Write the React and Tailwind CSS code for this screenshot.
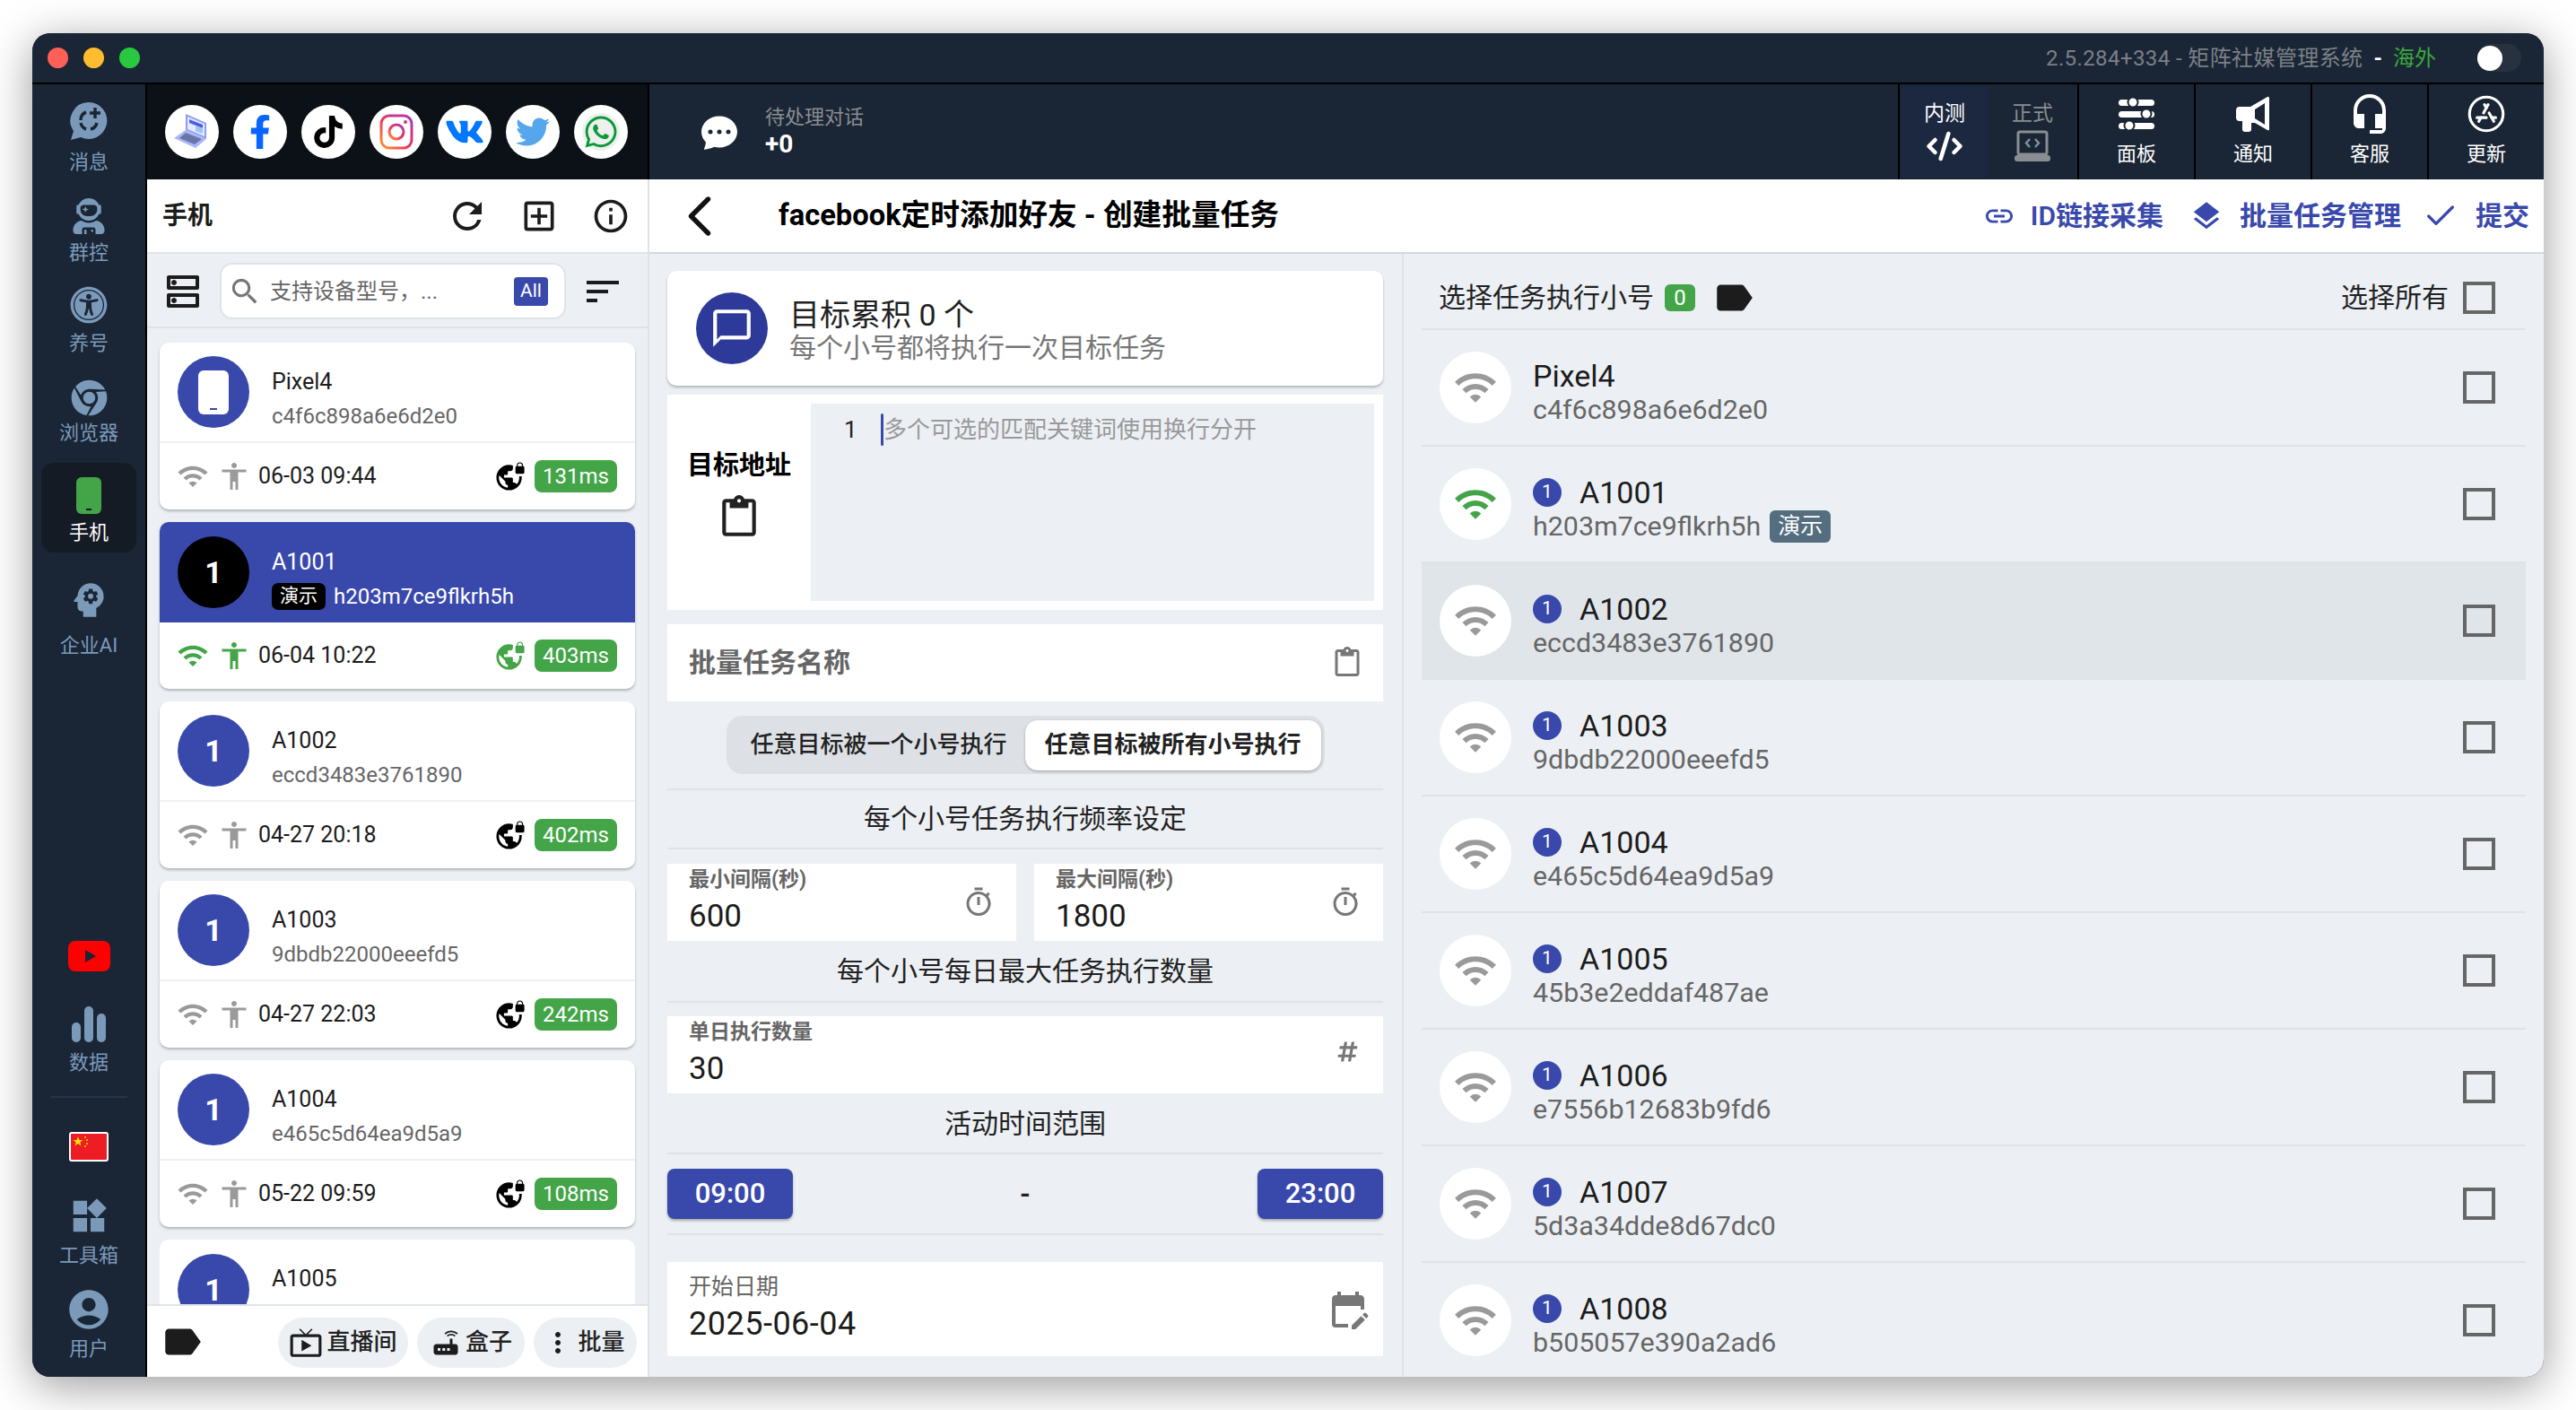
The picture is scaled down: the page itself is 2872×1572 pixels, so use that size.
import { ChevronLeft, Check, CodeXml } from 'lucide-react';
import { BsChatDotsFill } from 'react-icons/bs';
import { FaChrome, FaFacebookF, FaHashtag, FaTiktok, FaTwitter, FaUniversalAccess, FaUserAstronaut, FaVk, FaWhatsapp } from 'react-icons/fa';
import { MdAccessibility, MdAccountCircle, MdChatBubbleOutline, MdEditCalendar, MdHeadsetMic, MdInfoOutline, MdLabel, MdLayers, MdLink, MdMoreVert, MdOutlineAddBox, MdOutlineContentPaste, MdOutlineDns, MdOutlineLiveTv, MdOutlineTimer, MdPsychology, MdRefresh, MdRouter, MdSearch, MdSort, MdVpnLock, MdWidgets, MdWifi } from 'react-icons/md';
import { TbBrandAppstore } from 'react-icons/tb';

const cards = [
  { name: 'Pixel4', id: 'c4f6c898a6e6d2e0', time: '06-03 09:44', ping: '131ms', device: true },
  { name: 'A1001', id: 'h203m7ce9flkrh5h', time: '06-04 10:22', ping: '403ms', active: true },
  { name: 'A1002', id: 'eccd3483e3761890', time: '04-27 20:18', ping: '402ms' },
  { name: 'A1003', id: '9dbdb22000eeefd5', time: '04-27 22:03', ping: '242ms' },
  { name: 'A1004', id: 'e465c5d64ea9d5a9', time: '05-22 09:59', ping: '108ms' },
];

const rows = [
  { name: 'Pixel4', id: 'c4f6c898a6e6d2e0', device: true },
  { name: 'A1001', id: 'h203m7ce9flkrh5h', online: true, demo: true },
  { name: 'A1002', id: 'eccd3483e3761890', hover: true },
  { name: 'A1003', id: '9dbdb22000eeefd5' },
  { name: 'A1004', id: 'e465c5d64ea9d5a9' },
  { name: 'A1005', id: '45b3e2eddaf487ae' },
  { name: 'A1006', id: 'e7556b12683b9fd6' },
  { name: 'A1007', id: '5d3a34dde8d67dc0' },
  { name: 'A1008', id: 'b505057e390a2ad6' },
];

function BubbleIcon() {
  return (
    <svg width="44" height="44" viewBox="0 0 44 44">
      <path d="M22 1a20.500 20.500 0 1 1-9 39L2 43l3-10A20.500 20.500 0 0 1 22 1z" fill="#7b9aba" />
      <path d="M13 21a9.500 9.500 0 0 1 6-9M19 31a9.500 9.500 0 0 1-6-7M31 24a9.500 9.500 0 0 1-7 7" fill="none" stroke="#1a2635" strokeWidth="3.500" />
      <path d="M29 7v12M23 13h12" stroke="#1a2635" strokeWidth="3.500" />
    </svg>
  );
}

function BarsIcon() {
  return (
    <svg width="38" height="40" viewBox="0 0 38 40" fill="#7b9aba">
      <rect x="0" y="18" width="10" height="22" rx="5" />
      <rect x="14" y="0" width="10" height="40" rx="5" />
      <rect x="28" y="8" width="10" height="32" rx="5" />
    </svg>
  );
}

function LaptopArt() {
  return (
    <svg width="44" height="44" viewBox="0 0 44 44">
      <polygon points="15,2 38,12 38,30 15,20" fill="#8c9cf5" />
      <polygon points="17,5 36,13 36,27 17,19" fill="#e4e9ff" />
      <polygon points="19,8 34,14 34,18 19,12" fill="#4a5fe0" />
      <polygon points="26,15 34,18 34,24 26,21" fill="#9cc4f5" />
      <polygon points="15,20 38,30 26,40 2,29" fill="#aab6fa" />
      <polygon points="15,23 33,30 25,36 8,29" fill="#6b76a8" />
    </svg>
  );
}

function InstaArt() {
  return (
    <svg width="38" height="40" viewBox="0 0 38 40">
      <defs>
        <linearGradient id="ig" x1="0" y1="1" x2="1" y2="0">
          <stop offset="0" stopColor="#fd9a2e" />
          <stop offset="0.45" stopColor="#f0355e" />
          <stop offset="1" stopColor="#a63cb8" />
        </linearGradient>
      </defs>
      <rect x="2" y="2" width="34" height="36" rx="9" fill="none" stroke="url(#ig)" strokeWidth="3" />
      <circle cx="19" cy="20" r="8" fill="none" stroke="url(#ig)" strokeWidth="3" />
      <circle cx="29" cy="9" r="2" fill="#c0369a" />
    </svg>
  );
}

function WhatsappArt() {
  return (
    <span className="flex h-[42px] w-[42px] items-center justify-center rounded-full bg-[#efefef]">
      <FaWhatsapp size={40} color="#0a9b38" />
    </span>
  );
}

function FlagArt() {
  return (
    <svg width="44" height="33" viewBox="0 0 44 33">
      <rect x="1" y="1" width="42" height="31" rx="2" fill="#ee1c25" stroke="#fff" strokeWidth="2" />
      <polygon points="10,5 11.500,9 15.500,9 12.300,11.500 13.500,15.500 10,13 6.500,15.500 7.700,11.500 4.500,9 8.500,9" fill="#ffde00" />
      <circle cx="18" cy="6" r="1" fill="#ffde00" />
      <circle cx="20" cy="9" r="1" fill="#ffde00" />
      <circle cx="20" cy="13" r="1" fill="#ffde00" />
      <circle cx="18" cy="16" r="1" fill="#ffde00" />
    </svg>
  );
}

function YoutubeArt() {
  return (
    <svg width="47" height="34" viewBox="0 0 47 34">
      <rect width="47" height="34" rx="8" fill="#fe0000" />
      <polygon points="19,10 31,17 19,24" fill="#1a2635" />
    </svg>
  );
}

function LaptopCodeIcon() {
  return (
    <svg width="40" height="36" viewBox="0 0 40 36" fill="none">
      <rect x="4" y="2" width="32" height="25" rx="2" stroke="#8a8d92" strokeWidth="3" />
      <path d="M17 10l-4 4.500 4 4.500M23 10l4 4.500-4 4.500" stroke="#8a8d92" strokeWidth="2.500" />
      <rect x="0" y="28" width="40" height="7" rx="3" fill="#8a8d92" />
    </svg>
  );
}

function SlidersIcon() {
  return (
    <svg width="40" height="40" viewBox="0 0 40 40">
      <rect x="0" y="4" width="40" height="7" rx="3.500" fill="#fff" />
      <rect x="0" y="17" width="40" height="7" rx="3.500" fill="#fff" />
      <rect x="0" y="30" width="40" height="7" rx="3.500" fill="#fff" />
      <circle cx="16" cy="7" r="5.500" fill="#fff" stroke="#1a2635" strokeWidth="2" />
      <circle cx="31" cy="20" r="5.500" fill="#fff" stroke="#1a2635" strokeWidth="2" />
      <circle cx="12" cy="33" r="5.500" fill="#fff" stroke="#1a2635" strokeWidth="2" />
    </svg>
  );
}

function MegaphoneIcon() {
  return (
    <svg width="40" height="40" viewBox="0 0 40 40">
      <path d="M5 12h12L36 1q2-1 2 2v34q0 2-2 1L22 30h-4v7q0 3-3 3h-4q-3 0-3-3v-9H5q-4 0-4-4V16q0-4 4-4z" fill="#fff" />
      <path d="M22 15l11-7v24l-11-7z" fill="#1a2635" />
    </svg>
  );
}

function SideItem({ icon, label, gap, top }) {
  return (
    <div className={`flex flex-col items-center ${top}`}>
      <div className="flex h-[44px] items-center justify-center">{icon}</div>
      <span className={`text-[22px] leading-[30px] text-[#7b9aba] ${gap}`}>{label}</span>
    </div>
  );
}

function Sidebar() {
  return (
    <div className="flex w-[128px] shrink-0 flex-col justify-between border-r-2 border-black bg-[#1a2635] pb-[16px]">
      <div className="flex flex-col">
        <SideItem top="mt-[19px]" gap="mt-[9px]" label="消息" icon={<BubbleIcon />} />
        <SideItem top="mt-[23px]" gap="mt-[4px]" label="群控" icon={<FaUserAstronaut size={40} color="#7b9aba" />} />
        <SideItem top="mt-[21px]" gap="mt-[6px]" label="养号" icon={<FaUniversalAccess size={42} color="#7b9aba" />} />
        <SideItem top="mt-[23px]" gap="mt-[3px]" label="浏览器" icon={<FaChrome size={41} color="#7b9aba" />} />
        <div className="mx-[10px] mt-[18px] flex h-[100px] flex-col items-center rounded-[14px] bg-[#141b24] pt-[16px]">
          <div className="flex h-[41px] w-[28px] items-end justify-center rounded-[6px] bg-[#43a547] pb-[4px]">
            <div className="h-[2px] w-[6px] bg-[#141b24]" />
          </div>
          <span className="mt-[6px] text-[22px] leading-[30px] text-white">手机</span>
        </div>
        <SideItem top="mt-[31px]" gap="mt-[14px]" label="企业AI" icon={<MdPsychology size={50} color="#7b9aba" />} />
      </div>
      <div className="flex flex-col items-center">
        <YoutubeArt />
        <SideItem top="mt-[37px]" gap="mt-[6px]" label="数据" icon={<BarsIcon />} />
        <div className="mt-[22px] h-[2px] w-[86px] bg-[#263449]" />
        <div className="mt-[38px]"><FlagArt /></div>
        <SideItem top="mt-[39px]" gap="mt-[7px]" label="工具箱" icon={<MdWidgets size={46} color="#7b9aba" />} />
        <SideItem top="mt-[23px]" gap="mt-[7px]" label="用户" icon={<MdAccountCircle size={52} color="#7b9aba" />} />
      </div>
    </div>
  );
}

function SocialStrip() {
  const items = [
    <LaptopArt key="laptop" />,
    <FaFacebookF key="fb" size={38} color="#0866ff" />,
    <FaTiktok key="tt" size={36} color="#000" />,
    <InstaArt key="ig" />,
    <FaVk key="vk" size={44} color="#0077ff" />,
    <FaTwitter key="tw" size={38} color="#55a6ec" />,
    <WhatsappArt key="wa" />,
  ];
  return (
    <div className="flex w-[558px] shrink-0 items-start gap-[16px] bg-[#0b1116] pl-[20px] pt-[23px]">
      {items.map((item, i) => (
        <div key={i} className="flex h-[60px] w-[60px] items-center justify-center rounded-full bg-white">{item}</div>
      ))}
    </div>
  );
}

function TopButton({ icon, label }) {
  return (
    <div className="flex w-[130px] flex-col items-center border-l-2 border-black pt-[11px]">
      <div className="flex h-[44px] items-center justify-center">{icon}</div>
      <span className="mt-[8px] text-[22px] leading-[30px] text-white">{label}</span>
    </div>
  );
}

function TopBar() {
  return (
    <div className="flex h-[106px] shrink-0">
      <SocialStrip />
      <div className="flex flex-1 border-l-2 border-black bg-[#1a2635]">
        <div className="ml-[58px] flex items-center">
          <BsChatDotsFill size={40} color="#fff" />
          <div className="ml-[31px] mb-[3px] flex flex-col">
            <span className="text-[22px] leading-[30px] text-[#8a8d92]">待处理对话</span>
            <span className="text-[28px] font-bold leading-[30px] text-white">+0</span>
          </div>
        </div>
        <div className="ml-auto flex">
          <div className="flex border-l-2 border-black py-[2px] pl-[2px]">
            <div className="flex w-[96px] flex-col items-center bg-[#1c2740] pt-[17px]">
              <span className="text-[23px] leading-[28px] text-white">内测</span>
              <CodeXml size={42} color="#fff" strokeWidth={2.6} className="mt-[1px]" />
            </div>
            <div className="flex w-[100px] flex-col items-center pt-[17px]">
              <span className="text-[23px] leading-[28px] text-[#8a8d92]">正式</span>
              <div className="mt-[4px]"><LaptopCodeIcon /></div>
            </div>
          </div>
          <TopButton label="面板" icon={<SlidersIcon />} />
          <TopButton label="通知" icon={<MegaphoneIcon />} />
          <TopButton label="客服" icon={<MdHeadsetMic size={48} color="#fff" />} />
          <TopButton label="更新" icon={<TbBrandAppstore size={50} color="#fff" strokeWidth={1.5} />} />
        </div>
      </div>
    </div>
  );
}

function CardHead({ card, green }) {
  return (
    <div className={`flex h-[112px] items-center pl-[20px] ${green ? 'bg-[#3949ab]' : 'border-b-2 border-[#eef0f3]'}`}>
      <div className={`flex h-[80px] w-[80px] shrink-0 items-center justify-center rounded-full ${green ? 'bg-black' : 'bg-[#3949ab]'}`}>
        {card.device ? (
          <div className="flex h-[49px] w-[34px] items-end justify-center rounded-[6px] bg-white pb-[5px]">
            <div className="h-[2px] w-[8px] bg-[#3949ab]" />
          </div>
        ) : (
          <span className="text-[34px] font-bold text-white">1</span>
        )}
      </div>
      <div className="ml-[25px] mt-[14px] flex flex-col">
        <span className={`text-[25px] leading-[34px] ${green ? 'text-white' : 'text-[#1c1c1c]'}`}>{card.name}</span>
        <div className="mt-[5px] flex items-center">
          {green && (
            <span className="mr-[9px] flex h-[30px] w-[60px] items-center justify-center rounded-[7px] bg-black text-[21px] text-white">演示</span>
          )}
          <span className={`text-[24px] leading-[32px] ${green ? 'text-white' : 'text-[#666]'}`}>{card.id}</span>
        </div>
      </div>
    </div>
  );
}

function DeviceCard({ card }) {
  const green = card.active;
  const iconColor = green ? '#43a547' : '#9a9a9a';
  return (
    <div className="h-[186px] shrink-0 overflow-hidden rounded-[10px] bg-white shadow-[0_2px_3px_rgba(0,0,0,0.25)]">
      <CardHead card={card} green={green} />
      <div className="flex h-[74px] items-center pl-[19px] pr-[20px]">
        <MdWifi size={36} color={iconColor} />
        <MdAccessibility size={36} color={iconColor} className="ml-[10px]" />
        <span className="ml-[9px] text-[25px] text-[#1c1c1c]">{card.time}</span>
        <MdVpnLock size={34} color={green ? '#43a547' : '#000'} className="ml-auto" />
        <span className="ml-[10px] flex h-[36px] w-[92px] items-center justify-center rounded-[8px] bg-[#43a547] text-[24px] text-white">{card.ping}</span>
      </div>
    </div>
  );
}

// A1005 only peeks out above the bottom bar, so just its avatar and name are drawn
function PartialCard() {
  return (
    <div className="h-[72px] shrink-0 overflow-hidden rounded-t-[10px] bg-white">
      <div className="flex items-start pl-[20px] pt-[16px]">
        <div className="flex h-[80px] w-[80px] shrink-0 items-center justify-center rounded-full bg-[#3949ab]">
          <span className="text-[34px] font-bold text-white">1</span>
        </div>
        <span className="ml-[25px] mt-[11px] text-[25px] leading-[34px] text-[#1c1c1c]">A1005</span>
      </div>
    </div>
  );
}

function PillButton({ icon, label, width }) {
  return (
    <div className={`flex h-[56px] items-center justify-center gap-[4px] rounded-full bg-[#ecf0f4] text-[26px] font-medium text-[#222] ${width}`}>
      {icon}
      <span>{label}</span>
    </div>
  );
}

function LeftPanel() {
  return (
    <div className="flex w-[560px] shrink-0 flex-col border-r-2 border-[#dfe3e8]">
      <div className="flex h-[83px] shrink-0 items-center border-b-2 border-[#dfe3e8] bg-white pl-[17px]">
        <span className="text-[28px] font-bold text-[#1c1c1c]">手机</span>
        <MdRefresh size={48} color="#1c1c1c" className="ml-[260px]" />
        <MdOutlineAddBox size={44} color="#1c1c1c" className="ml-[34px]" />
        <MdInfoOutline size={44} color="#1c1c1c" className="ml-[36px]" />
      </div>
      <div className="flex h-[83px] shrink-0 items-center border-b-2 border-[#dfe3e8] bg-[#ecf0f4] pl-[16px] pt-[2px]">
        <MdOutlineDns size={48} color="#1c1c1c" />
        <div className="ml-[17px] flex h-[63px] w-[386px] items-center rounded-[14px] border-2 border-[#dfe3e8] bg-white pl-[7px] pr-[18px]">
          <MdSearch size={38} color="#777" />
          <span className="ml-[9px] text-[24px] text-[#666]">支持设备型号，...</span>
          <span className="ml-auto flex h-[32px] w-[38px] items-center justify-center rounded-[4px] bg-[#3949ab] text-[21px] text-white">All</span>
        </div>
        <MdSort size={48} color="#1c1c1c" className="ml-[17px]" />
      </div>
      <div className="flex min-h-0 flex-1 flex-col gap-[14px] overflow-hidden bg-[#ecf0f4] px-[14px] pt-[16px]">
        {cards.map((card) => <DeviceCard key={card.name} card={card} />)}
        <PartialCard />
      </div>
      <div className="flex h-[81px] shrink-0 items-center border-t-2 border-[#dfe3e8] bg-white pl-[14px]">
        <MdLabel size={50} color="#1c1c1c" />
        <div className="ml-[82px] mt-[2px] flex gap-[10px]">
          <PillButton width="w-[145px]" label="直播间" icon={<MdOutlineLiveTv size={38} color="#1c1c1c" />} />
          <PillButton width="w-[120px]" label="盒子" icon={<MdRouter size={36} color="#1c1c1c" />} />
          <PillButton width="w-[115px] pr-[4px]" label="批量" icon={<MdMoreVert size={36} color="#1c1c1c" />} />
        </div>
      </div>
    </div>
  );
}

function NavAction({ icon, label, className }) {
  return (
    <div className={`flex items-center text-[30px] font-semibold text-[#3949ab] ${className}`}>
      {icon}
      <span>{label}</span>
    </div>
  );
}

function SectionTitle({ children, className }) {
  return (
    <div className={`flex items-center justify-center border-b-2 border-[#dfe3e8] text-[30px] text-[#222] ${className}`}>
      {children}
    </div>
  );
}

function NumberField({ label, value, icon, className }) {
  return (
    <div className={`flex h-[86px] items-center justify-between bg-white pl-[24px] pr-[24px] ${className}`}>
      <div className="flex flex-col self-start pt-[4px]">
        <span className="text-[23px] font-bold leading-[28px] text-[#666]">{label}</span>
        <span className="mt-[4px] text-[35px] leading-[46px] text-[#1c1c1c]">{value}</span>
      </div>
      {icon}
    </div>
  );
}

function TaskForm() {
  return (
    <div className="flex w-[841px] shrink-0 flex-col overflow-hidden border-r-2 border-[#dfe3e8] pl-[20px] pr-[21px]">
      <div className="mt-[19px] flex h-[128px] shrink-0 items-center rounded-[10px] bg-white pl-[32px] shadow-[0_2px_3px_rgba(0,0,0,0.25)]">
        <div className="flex h-[80px] w-[80px] items-center justify-center rounded-full bg-[#2d3a9a]">
          <MdChatBubbleOutline size={50} color="#fff" />
        </div>
        <div className="ml-[24px] mt-[6px] flex flex-col">
          <span className="text-[34px] leading-[38px] text-[#222]">目标累积 0 个</span>
          <span className="text-[30px] leading-[36px] text-[#777]">每个小号都将执行一次目标任务</span>
        </div>
      </div>
      <div className="mt-[10px] flex h-[240px] shrink-0 bg-white py-[10px] pr-[10px]">
        <div className="flex w-[160px] shrink-0 flex-col items-center pt-[50px]">
          <span className="text-[29px] font-bold leading-[38px] text-black">目标地址</span>
          <MdOutlineContentPaste size={50} color="#222" className="mt-[14px]" />
        </div>
        <div className="flex flex-1 items-start bg-[#ecf0f4] pl-[37px] pt-[11px]">
          <span className="w-[41px] text-[26px] leading-[36px] text-[#222]">1</span>
          <span className="h-[36px] w-[3px] rounded-full bg-[#3949ab]" />
          <span className="text-[26px] leading-[36px] text-[#999]">多个可选的匹配关键词使用换行分开</span>
        </div>
      </div>
      <div className="mt-[16px] flex h-[86px] shrink-0 items-center justify-between bg-white pl-[24px] pr-[22px]">
        <span className="mb-[2px] text-[30px] font-bold text-[#666]">批量任务名称</span>
        <MdOutlineContentPaste size={36} color="#777" />
      </div>
      <div className="mt-[16px] flex shrink-0 justify-center border-b-2 border-[#dfe3e8] pb-[16px]">
        <div className="flex h-[65px] w-[667px] items-center rounded-[18px] bg-[#dde1e6] pl-[27px] pr-[4px] text-[26px] font-medium text-[#222]">
          <span>任意目标被一个小号执行</span>
          <span className="ml-auto flex h-[56px] w-[330px] items-center justify-center rounded-[14px] bg-white font-semibold shadow-[0_1px_3px_rgba(0,0,0,0.3)]">任意目标被所有小号执行</span>
        </div>
      </div>
      <SectionTitle className="h-[66px] shrink-0 pb-[2px]">每个小号任务执行频率设定</SectionTitle>
      <div className="mt-[16px] flex shrink-0 gap-[20px]">
        <NumberField className="flex-1" label="最小间隔(秒)" value="600" icon={<MdOutlineTimer size={36} color="#777" />} />
        <NumberField className="flex-1" label="最大间隔(秒)" value="1800" icon={<MdOutlineTimer size={36} color="#777" />} />
      </div>
      <SectionTitle className="h-[69px] shrink-0">每个小号每日最大任务执行数量</SectionTitle>
      <div className="mt-[15px] shrink-0">
        <NumberField label="单日执行数量" value="30" icon={<FaHashtag size={25} color="#777" className="mb-[8px] mr-[3px]" />} />
      </div>
      <SectionTitle className="h-[68px] shrink-0">活动时间范围</SectionTitle>
      <div className="mt-[16px] flex shrink-0 items-start justify-between border-b-2 border-[#dfe3e8] pb-[16px]">
        <span className="flex h-[56px] w-[140px] items-center justify-center rounded-[8px] bg-[#3949ab] text-[31px] font-medium text-white shadow-[0_2px_3px_rgba(0,0,0,0.3)]">09:00</span>
        <span className="text-[30px] font-bold leading-[56px] text-[#222]">-</span>
        <span className="flex h-[56px] w-[140px] items-center justify-center rounded-[8px] bg-[#3949ab] text-[31px] font-medium text-white shadow-[0_2px_3px_rgba(0,0,0,0.3)]">23:00</span>
      </div>
      <div className="mt-[30px] flex h-[105px] shrink-0 items-center justify-between bg-white pl-[24px] pr-[15px]">
        <div className="flex flex-col self-start pt-[13px]">
          <span className="text-[25px] leading-[30px] text-[#666]">开始日期</span>
          <span className="mt-[4px] text-[36px] leading-[44px] tracking-[0.5px] text-[#1c1c1c]">2025-06-04</span>
        </div>
        <MdEditCalendar size={48} color="#777" />
      </div>
    </div>
  );
}

function CheckBox() {
  return <div className="h-[36px] w-[36px] shrink-0 border-4 border-[#666]" />;
}

function AccountRow({ row }) {
  return (
    <div className={`flex h-[130px] shrink-0 items-center border-b-2 border-[#dfe3e8] pl-[20px] pr-[34px] ${row.hover ? 'bg-[#e0e5e9]' : ''}`}>
      <div className="flex h-[80px] w-[80px] shrink-0 items-center justify-center rounded-full bg-white">
        <MdWifi size={50} color={row.online ? '#43a547' : '#9a9a9a'} />
      </div>
      <div className="ml-[24px] mt-[10px] flex flex-col">
        <div className="flex items-center">
          {!row.device && (
            <span className="mr-[20px] flex h-[32px] w-[32px] items-center justify-center rounded-full bg-[#3949ab] text-[21px] text-white">1</span>
          )}
          <span className="text-[34px] leading-[40px] text-[#1c1c1c]">{row.name}</span>
        </div>
        <div className="flex items-center">
          <span className="text-[30.400px] leading-[36px] text-[#666]">{row.id}</span>
          {row.demo && (
            <span className="ml-[10px] flex h-[36px] w-[68px] items-center justify-center rounded-[6px] bg-[#546e7f] text-[25px] text-white">演示</span>
          )}
        </div>
      </div>
      <div className="ml-auto"><CheckBox /></div>
    </div>
  );
}

function AccountList() {
  return (
    <div className="flex min-w-0 flex-1 flex-col overflow-hidden px-[20px]">
      <div className="flex h-[85px] shrink-0 items-center border-b-2 border-[#dfe3e8] pl-[19px] pr-[34px] pt-[14px]">
        <span className="text-[30px] text-[#222]">选择任务执行小号</span>
        <span className="ml-[12px] flex h-[30px] w-[34px] items-center justify-center rounded-[6px] bg-[#43a547] text-[24px] text-white">0</span>
        <MdLabel size={50} color="#1c1c1c" className="ml-[18px]" />
        <span className="ml-auto text-[30px] text-[#222]">选择所有</span>
        <div className="ml-[16px]"><CheckBox /></div>
      </div>
      {rows.map((row) => <AccountRow key={row.name} row={row} />)}
    </div>
  );
}

export default function App() {
  return (
    <div className="h-[1572px] w-[2872px] overflow-hidden bg-white pl-[36px] pt-[37px] font-['Roboto','Noto_Sans_CJK_SC',sans-serif]">
      <div className="flex h-[1498px] w-[2800px] flex-col overflow-hidden rounded-[20px] bg-[#1a2635] shadow-[0_10px_50px_rgba(0,0,0,0.4)]">
        <div className="flex h-[57px] shrink-0 items-center border-b-2 border-black bg-[#1a2635] pl-[17px] pr-[25px]">
          <div className="flex gap-[17px]">
            <span className="h-[23px] w-[23px] rounded-full bg-[#fe5f57]" />
            <span className="h-[23px] w-[23px] rounded-full bg-[#febc2e]" />
            <span className="h-[23px] w-[23px] rounded-full bg-[#28c840]" />
          </div>
          <span className="ml-auto text-[24px] tracking-[0.4px] text-[#7b8088]">2.5.284+334 - 矩阵社媒管理系统</span>
          <span className="ml-[12px] text-[24px] font-bold text-white">-</span>
          <span className="ml-[12px] text-[24px] text-[#3aa63f]">海外</span>
          <div className="ml-[46px] flex h-[31px] w-[49px] items-center rounded-full bg-[#28313f]">
            <span className="h-[28px] w-[28px] rounded-full bg-white" />
          </div>
        </div>
        <div className="flex min-h-0 flex-1">
          <Sidebar />
          <div className="flex min-w-0 flex-1 flex-col">
            <TopBar />
            <div className="flex min-h-0 flex-1 bg-[#ecf0f4]">
              <LeftPanel />
              <div className="flex min-w-0 flex-1 flex-col">
                <div className="flex h-[83px] shrink-0 items-center border-b-2 border-[#d5d9dd] bg-white pl-[18px] pr-[16px]">
                  <ChevronLeft size={76} strokeWidth={1.7} color="#111" />
                  <span className="ml-[50px] text-[32.700px] font-bold text-black">facebook定时添加好友 - 创建批量任务</span>
                  <NavAction className="ml-auto" label="ID链接采集" icon={<MdLink size={36} className="mr-[17px]" />} />
                  <NavAction className="ml-[29px]" label="批量任务管理" icon={<MdLayers size={38} className="mr-[18px]" />} />
                  <NavAction className="ml-[24px]" label="提交" icon={<Check size={40} strokeWidth={2} className="mr-[19px]" />} />
                </div>
                <div className="flex min-h-0 flex-1">
                  <TaskForm />
                  <AccountList />
                </div>
              </div>
            </div>
          </div>
        </div>
      </div>
    </div>
  );
}
